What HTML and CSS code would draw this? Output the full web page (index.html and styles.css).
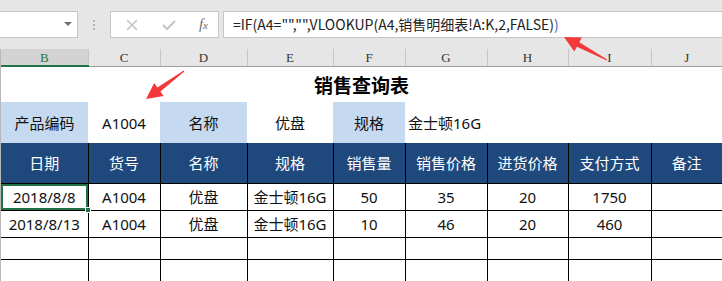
FILE: index.html
```html
<!DOCTYPE html>
<html>
  <head>
    <link rel="stylesheet" href="styles.css">
    <title>销售查询表</title>
  </head>
  <body>
    <div class="toolbar">
      <div class="name-box">
        <span class="drop"></span>
      </div>
      <div class="grip"><i></i><i></i><i></i></div>
      <div class="fx-box">
        <svg width="14" height="14" viewBox="0 0 14 14">
          <path d="M2 2 L12 12 M12 2 L2 12" stroke="#c4c4c4" stroke-width="1.6" fill="none" />
        </svg>
        <svg width="16" height="14" viewBox="0 0 16 14">
          <path d="M2 7 L6 11 L14 3" stroke="#c4c4c4" stroke-width="2" fill="none" />
        </svg>
        <span class="fx">f<small>x</small></span>
      </div>
      <div class="formula">=IF(A4="","",VLOOKUP(A4,销售明细表!A:K,2,FALSE)<span class="paren">)</span></div>
    </div>

    <div class="sheet">
      <table class="grid">
        <colgroup>
          <col style="width: 87px">
          <col style="width: 72px">
          <col style="width: 87px">
          <col style="width: 86px">
          <col style="width: 72px">
          <col style="width: 82px">
          <col style="width: 81px">
          <col style="width: 83px">
          <col style="width: 71px">
        </colgroup>
        <tr class="col-heads">
          <th class="active">B</th><th>C</th><th>D</th><th>E</th><th>F</th><th>G</th><th>H</th><th>I</th><th>J</th>
        </tr>
        <tr class="title-row">
          <td colspan="9">销售查询表</td>
        </tr>
        <tr class="info-row">
          <td class="label">产品编码</td>
          <td>A1004</td>
          <td class="label">名称</td>
          <td>优盘</td>
          <td class="label">规格</td>
          <td class="left" colspan="4">金士顿16G</td>
        </tr>
        <tr class="head-row">
          <td>日期</td><td>货号</td><td>名称</td><td>规格</td><td>销售量</td><td>销售价格</td><td>进货价格</td><td>支付方式</td><td>备注</td>
        </tr>
        <tr class="data-row">
          <td class="selected">2018/8/8<span class="handle"></span></td><td>A1004</td><td>优盘</td><td>金士顿16G</td><td>50</td><td>35</td><td>20</td><td>1750</td><td></td>
        </tr>
        <tr class="data-row">
          <td>2018/8/13</td><td>A1004</td><td>优盘</td><td>金士顿16G</td><td>10</td><td>46</td><td>20</td><td>460</td><td></td>
        </tr>
        <tr class="data-row short">
          <td></td><td></td><td></td><td></td><td></td><td></td><td></td><td></td><td></td>
        </tr>
        <tr class="data-row short">
          <td></td><td></td><td></td><td></td><td></td><td></td><td></td><td></td><td></td>
        </tr>
      </table>
    </div>

    <svg class="arrows" width="722" height="281" viewBox="0 0 722 281">
      <polygon points="183.7,70.6 157.4,87.5 154.2,83.1 146,99 163.6,95.9 160.4,91.5 184.3,71.4" fill="#f4393a" />
      <polygon points="607.2,59.6 579.3,42.3 581.9,37.5 564,37 574.3,51.5 576.9,46.7 606.8,60.4" fill="#f4393a" />
    </svg>
  </body>
</html>
```

FILE: styles.css
```css
* {
  box-sizing: border-box;
}
body {
  margin: 0;
  width: 722px;
  height: 281px;
  overflow: hidden;
  background-color: #fff;
  font-family: "Noto Sans", "Noto Sans CJK SC", sans-serif;
  position: relative;
}

.toolbar {
  height: 49px;
  background-color: #e6e6e6;
  display: flex;
  align-items: flex-start;
  padding-top: 11px;
}
.name-box {
  width: 78px;
  height: 27px;
  background-color: #fff;
  border: 1px solid #c6c6c6;
  border-left: none;
  position: relative;
}
.drop {
  position: absolute;
  right: 5px;
  top: 10px;
  border-left: 4px solid transparent;
  border-right: 4px solid transparent;
  border-top: 4px solid #707070;
}
.grip {
  width: 32px;
  height: 27px;
  display: flex;
  flex-direction: column;
  align-items: center;
  justify-content: center;
  gap: 2px;
}
.grip i {
  width: 2px;
  height: 2px;
  background-color: #b4b4b4;
}
.fx-box {
  width: 109px;
  height: 27px;
  background-color: #fff;
  border: 1px solid #c6c6c6;
  display: flex;
  align-items: center;
  justify-content: space-between;
  padding: 0 10px 0 14px;
}
.fx {
  font-family: "Liberation Serif", serif;
  font-style: italic;
  font-size: 15px;
  color: #707070;
}
.fx small {
  font-size: 11px;
}
.formula {
  flex: 1;
  height: 27px;
  margin-left: 4px;
  background-color: #fff;
  border: 1px solid #c6c6c6;
  border-right: none;
  padding-left: 9px;
  font-family: "Noto Sans CJK SC", sans-serif;
  font-size: 14px;
  line-height: 25px;
  color: #222;
  white-space: nowrap;
}
.paren {
  color: #4a5fb8;
}

.sheet {
  border-left: 1px solid #b8b8b8;
}
.grid {
  border-collapse: collapse;
  table-layout: fixed;
  width: 721px;
}
.grid td {
  padding: 0;
  text-align: center;
  font-size: 15px;
  color: #111;
  white-space: nowrap;
  overflow: hidden;
}

.col-heads th {
  height: 17px;
  padding: 0;
  background-color: #e6e6e6;
  border-left: 1px solid #c6c6c6;
  border-bottom: 1px solid #9e9e9e;
  font-family: "Liberation Serif", serif;
  font-weight: normal;
  font-size: 13px;
  line-height: 15px;
  color: #333;
}
.col-heads th:first-child {
  border-left: none;
}
.col-heads th.active {
  background-color: #d3d3d3;
  color: #217346;
  border-bottom: 2px solid #217346;
}

.title-row td {
  height: 36px;
  font-size: 19px;
  font-weight: bold;
  color: #000;
}

.info-row td {
  height: 41px;
}
.info-row td.label {
  background-color: #c5d9f1;
}
.info-row td.left {
  text-align: left;
  padding-left: 3px;
}

.head-row td {
  height: 40px;
  background-color: #1f497d;
  color: #fff;
  border-left: 1px solid #000;
  border-bottom: 1px solid #000;
}
.head-row td:first-child {
  border-left: none;
}

.data-row td {
  height: 27px;
  border: 1px solid #000;
}
.data-row td:first-child {
  border-left: none;
}
.data-row td:last-child {
  border-right: none;
}
.data-row.short td {
  height: 22px;
}
.data-row td.selected {
  position: relative;
  overflow: visible;
  box-shadow: inset 0 0 0 2px #217346;
}
.handle {
  position: absolute;
  right: -3px;
  bottom: -3px;
  width: 6px;
  height: 6px;
  background-color: #217346;
  border: 1px solid #fff;
}

.arrows {
  position: absolute;
  left: 0;
  top: 0;
  pointer-events: none;
}
```
